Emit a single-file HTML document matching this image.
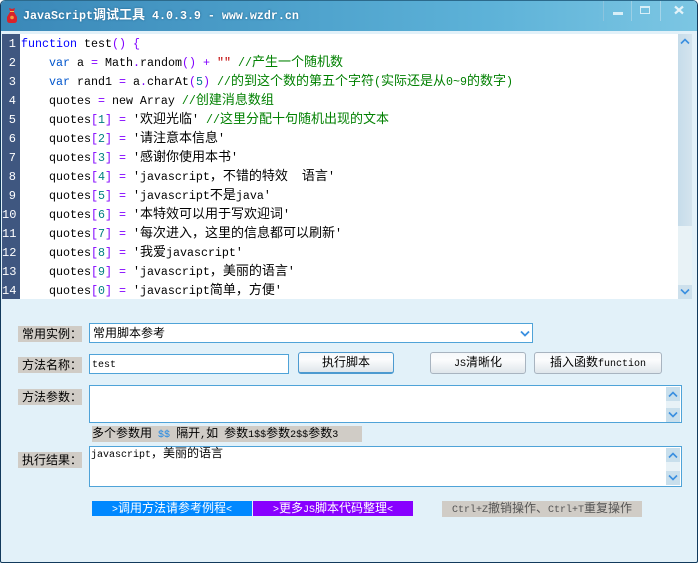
<!DOCTYPE html>
<html><head><meta charset="utf-8"><style>
html,body{margin:0;padding:0;background:#fff}
#w{position:relative;width:698px;height:563px;overflow:hidden;font:10px/16px "Liberation Mono",monospace;color:#000}
#w div{position:absolute;white-space:pre}
i{font:normal 12px/0 "WenQuanYi Zen Hei","Noto Sans CJK SC",sans-serif;color:inherit}
.l i,.t i{font-size:13px}
.k{color:#0000ff}.v{color:#0055cc}.p{color:#8000ff}.n{color:#008080}.g{color:#008000}
.ln{left:2px;width:14px;text-align:right;color:#fff;height:19px;font-size:12px;line-height:19px;margin-top:1px}
.l{left:21px;height:19px;font-size:11.67px;line-height:19px;margin-top:1px}
.lb{background:#d0ccc6;left:18px;width:60px;height:16px;line-height:21px;padding-left:4px}
.box{background:#fff;border:1px solid #4fa3d8;box-sizing:border-box}
.bt{box-sizing:border-box;top:352px;height:22px;border:1px solid #a8b4c0;border-radius:3px;background:linear-gradient(#f6f8fa,#fbfcfd 35%,#dfe6eb);text-align:center;line-height:24px}
.sb{background:#c9dfec;width:14px;height:14px}
.tr{background:#e8f2f7;width:14px}
svg{position:absolute;display:block}
</style></head><body><div id="w">
<div style="left:0;top:0;width:698px;height:563px;background:#e2f1f9;border-radius:5px 5px 2px 2px;border:1px solid #123a5c;border-top-color:#2c6a8c;box-sizing:border-box"></div>
<div style="left:1px;top:1px;width:696px;height:30px;border-radius:4px 4px 0 0;background:linear-gradient(90deg,#3a88b8 0%,#4fa3cd 45%,#5db2d8 70%,#7cc6e3 100%)"></div>
<svg style="left:7px;top:8px" width="10" height="15" viewBox="0 0 10 15"><path d="M2 0l3 1 3-1-1 3H3z" fill="#d8232a"/><path d="M3 4h4l3 5v3q0 3-3 3H3q-3 0-3-3V9z" fill="#d8232a"/><path d="M3 3.5h4" stroke="#f3c24a" stroke-width="1"/><circle cx="5" cy="9.5" r="1.8" fill="#f0a040"/></svg>
<div class="t" style="left:23px;top:7px;height:19px;color:#fff;font-weight:bold;font-size:11.67px;line-height:19px;text-shadow:0 0 2px #1d5f88">JavaScript<i style="font-weight:bold">调试工具</i> 4.0.3.9 - www.wzdr.cn</div>
<div style="left:603px;top:1px;width:1px;height:20px;background:#8cc4de"></div>
<div style="left:631px;top:1px;width:1px;height:20px;background:#9ccfe5"></div>
<div style="left:660px;top:1px;width:1px;height:20px;background:#a4d5ea"></div>
<div style="left:613px;top:12px;width:10px;height:3px;background:#d8eef7"></div>
<div style="left:640px;top:6px;width:8px;height:5px;border:1px solid #d8eef7;border-top-width:2px"></div>
<svg style="left:673px;top:5px" width="12" height="10" viewBox="0 0 12 10"><path d="M2 1.5l8 7M10 1.5l-8 7" stroke="#e4f3f9" stroke-width="2.2"/></svg>

<div style="left:2px;top:34px;width:690px;height:265px;background:#fff"></div>
<div style="left:2px;top:34px;width:18px;height:265px;background:#3f5780"></div>
<div style="left:678px;top:34px;width:14px;height:192px;background:linear-gradient(90deg,#c6dcea,#d4e4ee)"></div>
<div style="left:678px;top:226px;width:14px;height:59px;background:#e8f2f6"></div>
<div style="left:678px;top:285px;width:14px;height:14px;background:#cde0ec"></div>
<svg style="left:680px;top:38px" width="10" height="7"><path d="M1 5.5l4-4 4 4" fill="none" stroke="#3a8fe0" stroke-width="1.6"/></svg>
<svg style="left:680px;top:288px" width="10" height="7"><path d="M1 1.5l4 4 4-4" fill="none" stroke="#3a8fe0" stroke-width="1.6"/></svg>

<div class="ln" style="top:34px">1</div><div class="ln" style="top:53px">2</div><div class="ln" style="top:72px">3</div><div class="ln" style="top:91px">4</div><div class="ln" style="top:110px">5</div><div class="ln" style="top:129px">6</div><div class="ln" style="top:148px">7</div><div class="ln" style="top:167px">8</div><div class="ln" style="top:186px">9</div><div class="ln" style="top:205px">10</div><div class="ln" style="top:224px">11</div><div class="ln" style="top:243px">12</div><div class="ln" style="top:262px">13</div><div class="ln" style="top:281px">14</div>

<div class="l" style="top:34px"><span class="k">function</span> test<span class="p">()</span> <span class="p">{</span></div>
<div class="l" style="top:53px">    <span class="v">var</span> a <span class="p">=</span> Math<span class="p">.</span>random<span class="p">()</span> <span class="p">+</span> <span style="color:#c00000">""</span> <span class="g">//<i>产生一个随机数</i></span></div>
<div class="l" style="top:72px">    <span class="v">var</span> rand1 <span class="p">=</span> a<span class="p">.</span>charAt<span class="p">(</span><span class="n">5</span><span class="p">)</span> <span class="g">//<i>的到这个数的第五个字符</i>(<i>实际还是从</i>0~9<i>的数字</i>)</span></div>
<div class="l" style="top:91px">    quotes <span class="p">=</span> new Array <span class="g">//<i>创建消息数组</i></span></div>
<div class="l" style="top:110px">    quotes<span class="p">[</span><span class="n">1</span><span class="p">]</span> <span class="p">=</span> '<i>欢迎光临</i>' <span class="g">//<i>这里分配十句随机出现的文本</i></span></div>
<div class="l" style="top:129px">    quotes<span class="p">[</span><span class="n">2</span><span class="p">]</span> <span class="p">=</span> '<i>请注意本信息</i>'</div>
<div class="l" style="top:148px">    quotes<span class="p">[</span><span class="n">3</span><span class="p">]</span> <span class="p">=</span> '<i>感谢你使用本书</i>'</div>
<div class="l" style="top:167px">    quotes<span class="p">[</span><span class="n">4</span><span class="p">]</span> <span class="p">=</span> 'javascript<i>，不错的特效</i>  <i>语言</i>'</div>
<div class="l" style="top:186px">    quotes<span class="p">[</span><span class="n">5</span><span class="p">]</span> <span class="p">=</span> 'javascript<i>不是</i>java'</div>
<div class="l" style="top:205px">    quotes<span class="p">[</span><span class="n">6</span><span class="p">]</span> <span class="p">=</span> '<i>本特效可以用于写欢迎词</i>'</div>
<div class="l" style="top:224px">    quotes<span class="p">[</span><span class="n">7</span><span class="p">]</span> <span class="p">=</span> '<i>每次进入，这里的信息都可以刷新</i>'</div>
<div class="l" style="top:243px">    quotes<span class="p">[</span><span class="n">8</span><span class="p">]</span> <span class="p">=</span> '<i>我爱</i>javascript'</div>
<div class="l" style="top:262px">    quotes<span class="p">[</span><span class="n">9</span><span class="p">]</span> <span class="p">=</span> 'javascript<i>，美丽的语言</i>'</div>
<div class="l" style="top:281px">    quotes<span class="p">[</span><span class="n">0</span><span class="p">]</span> <span class="p">=</span> 'javascript<i>简单，方便</i>'</div>

<div class="lb" style="top:326px"><i>常用实例：</i></div>
<div class="lb" style="top:357px"><i>方法名称：</i></div>
<div class="lb" style="top:389px"><i>方法参数：</i></div>
<div class="lb" style="top:452px"><i>执行结果：</i></div>

<div class="box" style="left:89px;top:323px;width:444px;height:20px;padding-left:3px;line-height:23px"><i>常用脚本参考</i></div>
<svg style="left:520px;top:330px" width="10" height="7"><path d="M1 1.5l4 4 4-4" fill="none" stroke="#3a8fe0" stroke-width="1.8"/></svg>
<div class="box" style="left:89px;top:354px;width:200px;height:20px;padding-left:2px;line-height:21px">test</div>
<div class="bt" style="left:298px;width:96px;border-color:#4c9ad0;border-width:1px 1px 2px 1px"><i>执行脚本</i></div>
<div class="bt" style="left:430px;width:96px">JS<i>清晰化</i></div>
<div class="bt" style="left:534px;width:128px"><i>插入函数</i>function</div>

<div class="box" style="left:89px;top:385px;width:593px;height:38px"></div>
<div class="sb" style="left:666px;top:387px"></div><div class="tr" style="left:666px;top:401px;height:7px"></div><div class="sb" style="left:666px;top:408px"></div>
<svg style="left:668px;top:391px" width="10" height="7"><path d="M1 5.5l4-4 4 4" fill="none" stroke="#3a8fe0" stroke-width="1.6"/></svg>
<svg style="left:668px;top:411px" width="10" height="7"><path d="M1 1.5l4 4 4-4" fill="none" stroke="#3a8fe0" stroke-width="1.6"/></svg>

<div style="left:92px;top:426px;width:270px;height:16px;background:#d0ccc6;line-height:19px"><i>多个参数用</i> <span style="color:#1e88e5">$$</span> <i>隔开</i>,<i>如</i> <i>参数</i>1$$<i>参数</i>2$$<i>参数</i>3</div>

<div class="box" style="left:89px;top:446px;width:593px;height:41px;padding-left:1px;line-height:17px">javascript<i>，美丽的语言</i></div>
<div class="sb" style="left:666px;top:448px"></div><div class="tr" style="left:666px;top:462px;height:9px"></div><div class="sb" style="left:666px;top:471px"></div>
<svg style="left:668px;top:452px" width="10" height="7"><path d="M1 5.5l4-4 4 4" fill="none" stroke="#3a8fe0" stroke-width="1.6"/></svg>
<svg style="left:668px;top:474px" width="10" height="7"><path d="M1 1.5l4 4 4-4" fill="none" stroke="#3a8fe0" stroke-width="1.6"/></svg>

<div style="left:92px;top:501px;width:160px;height:15px;background:#0088ff;color:#fff;text-align:center;line-height:20px">&gt;<i>调用方法请参考例程</i>&lt;</div>
<div style="left:253px;top:501px;width:160px;height:15px;background:#8800ff;color:#fff;text-align:center;line-height:20px">&gt;<i>更多</i>JS<i>脚本代码整理</i>&lt;</div>
<div style="left:442px;top:501px;width:200px;height:16px;background:#d0ccc6;color:#555;text-align:center;line-height:20px">Ctrl+Z<i>撤销操作、</i>Ctrl+T<i>重复操作</i></div>
</div></body></html>
